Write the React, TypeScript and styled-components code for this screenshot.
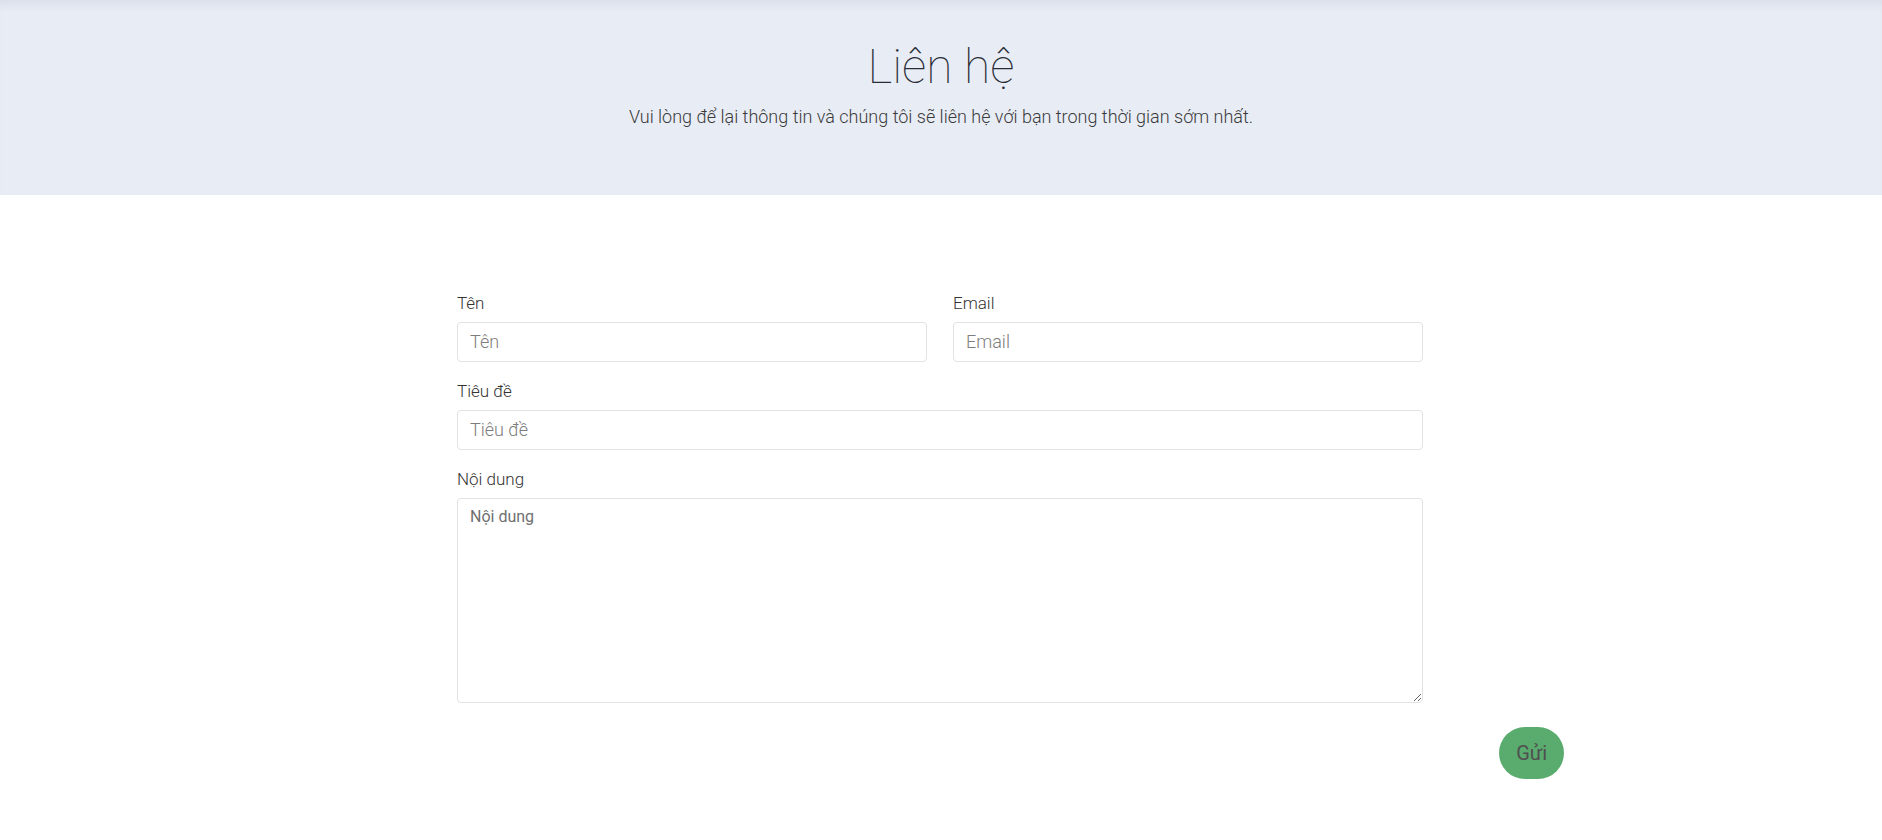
import styled, { createGlobalStyle } from 'styled-components';

const GlobalStyle = createGlobalStyle`
	html, body {
		margin: 0;
		padding: 0;
		background: #ffffff;
	}

	body {
		font-family: Roboto, 'Noto Sans', Arial, sans-serif;
		font-weight: 300;
		color: #333333;
	}

	* {
		box-sizing: border-box;
	}
`;

const Page = styled.div`
	min-height: 840px;
	background: #ffffff;
`;

const Hero = styled.header`
	background: #e8ecf5;
	box-shadow: inset 0 10px 10px -6px rgba(40, 50, 80, 0.08);
	padding: 38px 16px 65px;
	text-align: center;
`;

const Title = styled.h1`
	margin: 0 0 7px;
	font-size: 48px;
	line-height: 1.2;
	font-weight: 100;
	color: #282c36;
`;

const Lead = styled.p`
	margin: 0;
	font-size: 18px;
	line-height: 27px;
	font-weight: 300;
	color: #3a3a3a;
`;

const Body = styled.main`
	display: grid;
	grid-template-columns: 457px 966px 1fr;
	padding-top: 96px;
`;

const Form = styled.form`
	grid-column: 2;
	display: grid;
	grid-template-columns: 1fr 1fr;
	column-gap: 26px;
	row-gap: 17px;
`;

const Field = styled.div<{ wide?: boolean }>`
	display: flex;
	flex-direction: column;
	gap: 7px;
	grid-column: ${(p) => (p.wide ? '1 / -1' : 'auto')};
`;

const Label = styled.label`
	font-size: 17px;
	line-height: 24px;
	font-weight: 300;
	color: #333333;
`;

const Input = styled.input`
	height: 40px;
	padding: 0 12px;
	border: 1px solid #e2e2e2;
	border-radius: 4px;
	font-family: Roboto, Arial, sans-serif;
	font-size: 18px;
	font-weight: 300;
	color: #333333;
	outline: none;

	&::placeholder {
		color: #7d7d7d;
	}
`;

const TextArea = styled.textarea`
	height: 205px;
	padding: 7px 12px;
	border: 1px solid #e2e2e2;
	border-radius: 4px;
	font-family: Roboto, Arial, sans-serif;
	font-size: 16px;
	font-weight: 400;
	line-height: 22px;
	color: #333333;
	outline: none;
	resize: vertical;

	&::placeholder {
		color: #6f6f6f;
	}
`;

const Actions = styled.div`
	grid-column: 2 / 4;
	display: flex;
	justify-content: flex-end;
	padding: 24px 318px 0 0;
`;

const SendButton = styled.button`
	height: 52px;
	padding: 0 17px;
	border: none;
	border-radius: 26px;
	background: #5aab6e;
	font-family: Roboto, Arial, sans-serif;
	font-size: 20px;
	font-weight: 400;
	color: #4f4f4f;
	cursor: pointer;
`;

const App = () => {
	return (
		<Page>
			<GlobalStyle />
			<Hero>
				<Title>Liên hệ</Title>
				<Lead>Vui lòng để lại thông tin và chúng tôi sẽ liên hệ với bạn trong thời gian sớm nhất.</Lead>
			</Hero>
			<Body>
				<Form onSubmit={(e) => e.preventDefault()}>
					<Field>
						<Label htmlFor="name">Tên</Label>
						<Input id="name" placeholder="Tên" />
					</Field>
					<Field>
						<Label htmlFor="email">Email</Label>
						<Input id="email" type="email" placeholder="Email" />
					</Field>
					<Field wide>
						<Label htmlFor="subject">Tiêu đề</Label>
						<Input id="subject" placeholder="Tiêu đề" />
					</Field>
					<Field wide>
						<Label htmlFor="content">Nội dung</Label>
						<TextArea id="content" placeholder="Nội dung" />
					</Field>
				</Form>
				<Actions>
					<SendButton type="button">Gửi</SendButton>
				</Actions>
			</Body>
		</Page>
	);
};

export default App;
